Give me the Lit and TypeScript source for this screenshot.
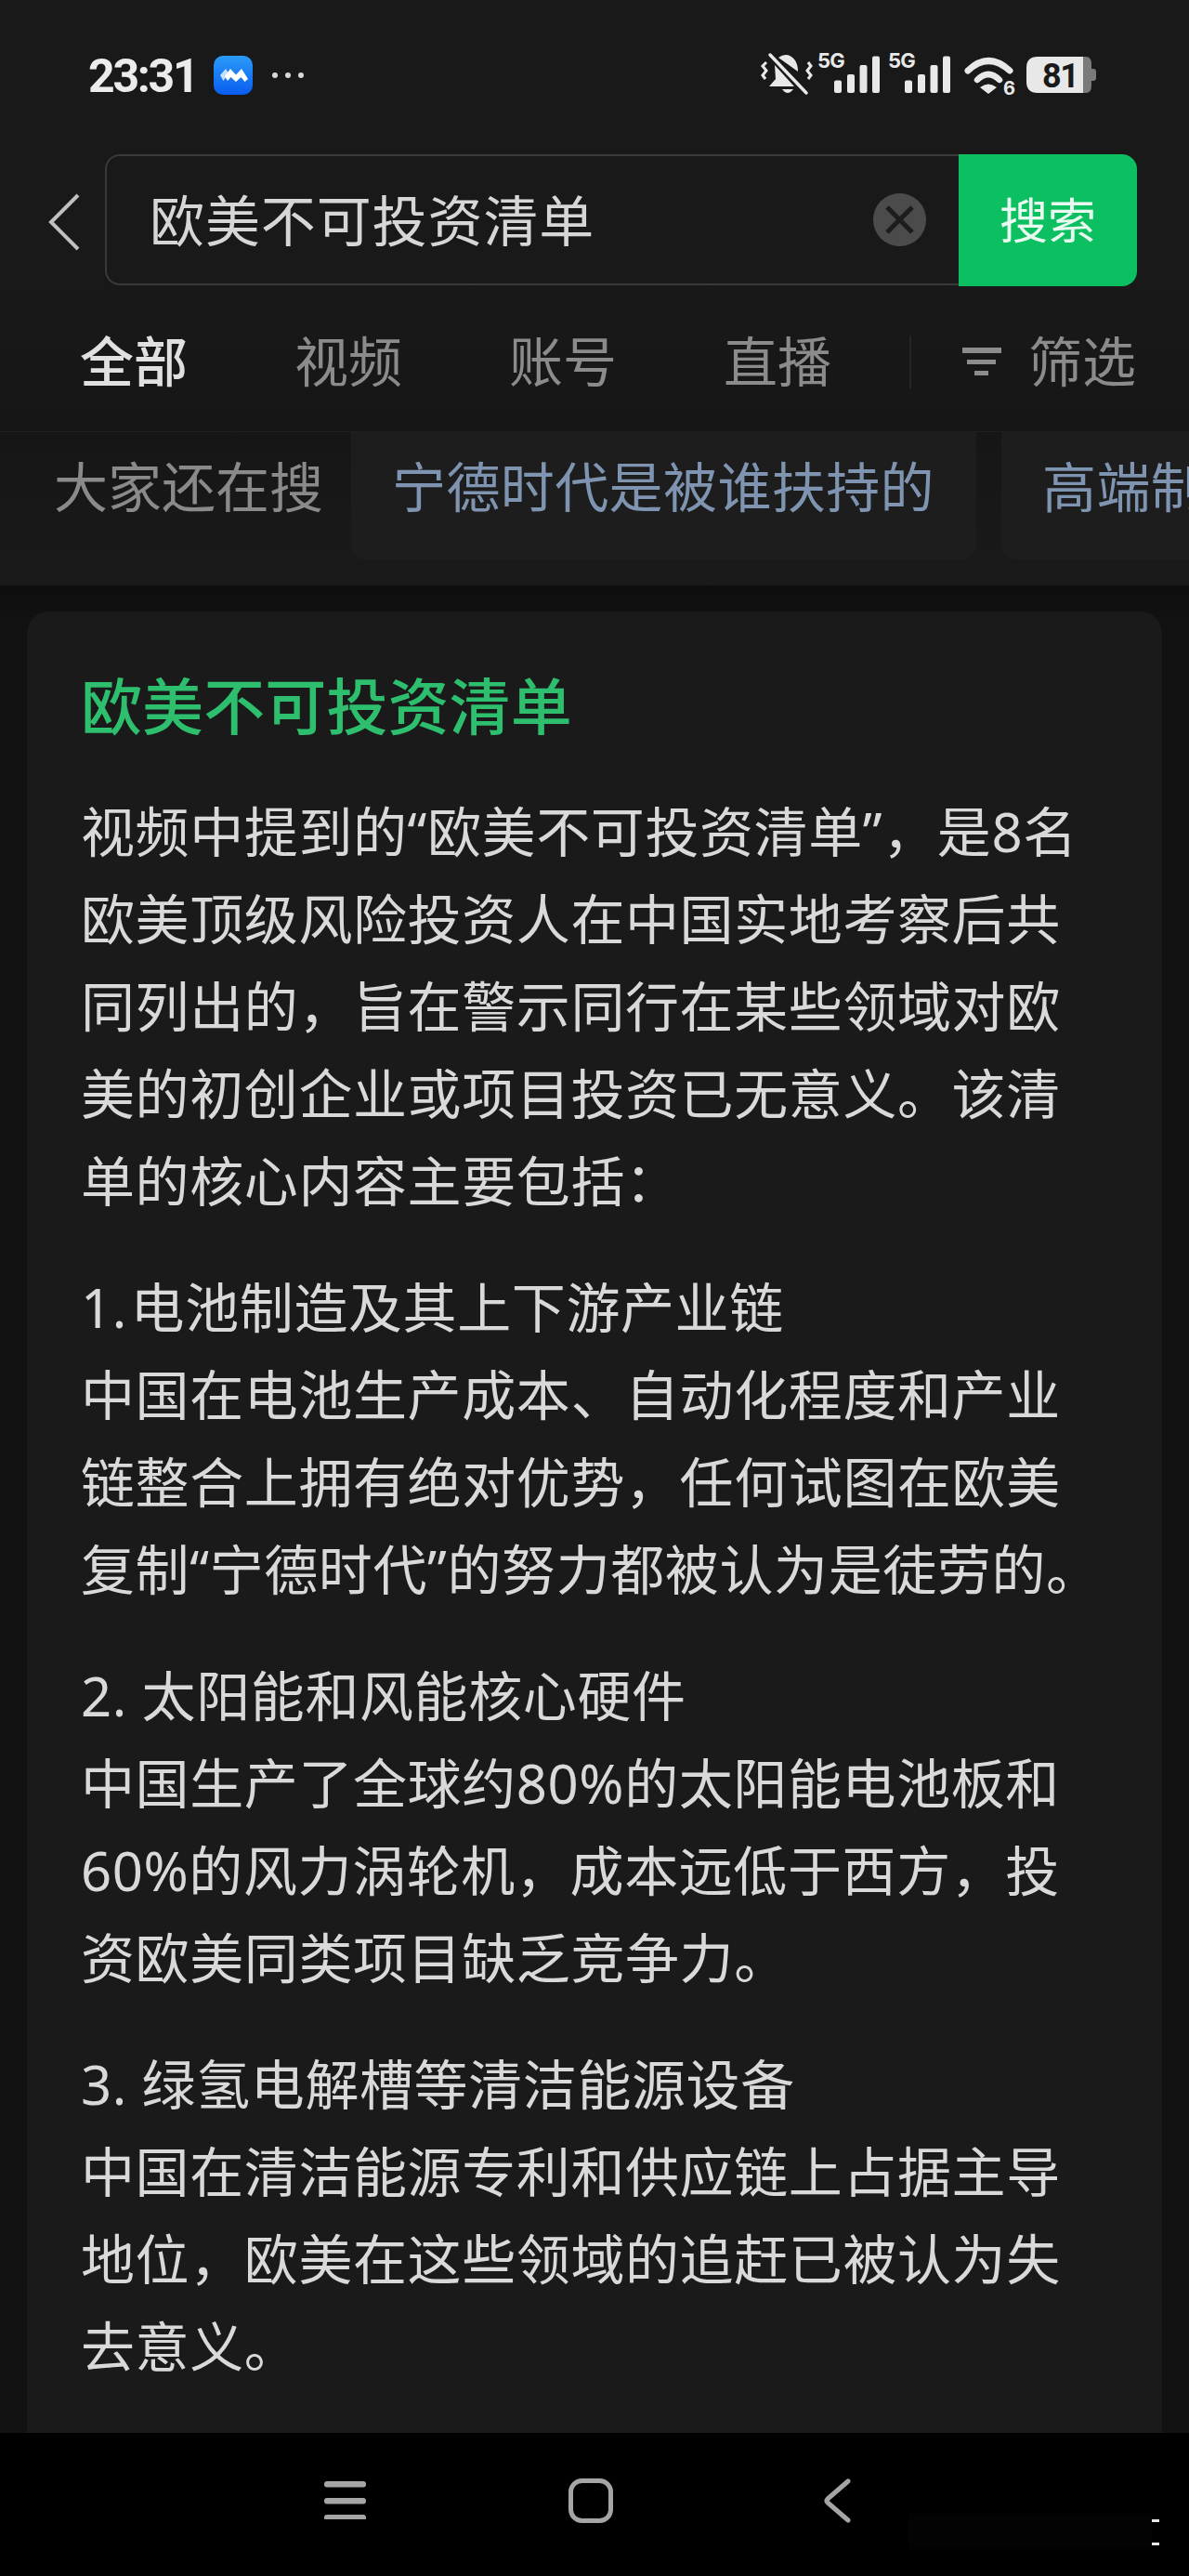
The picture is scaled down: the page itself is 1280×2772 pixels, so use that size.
import { LitElement, html, css, svg } from "lit";
import { customElement } from "lit/decorators.js";

const sections = [
  {
    head: "1. 电池制造及其上下游产业链",
    tight: true,
    lines: ["中国在电池生产成本、自动化程度和产业", "链整合上拥有绝对优势，任何试图在欧美", "复制“宁德时代”的努力都被认为是徒劳的。"],
  },
  {
    head: "2. 太阳能和风能核心硬件",
    tight: false,
    lines: ["中国生产了全球约80%的太阳能电池板和", "60%的风力涡轮机，成本远低于西方，投", "资欧美同类项目缺乏竞争力。"],
  },
  {
    head: "3. 绿氢电解槽等清洁能源设备",
    tight: false,
    lines: ["中国在清洁能源专利和供应链上占据主导", "地位，欧美在这些领域的追赶已被认为失", "去意义。"],
  },
];

const intro = ["视频中提到的“欧美不可投资清单”，是8名", "欧美顶级风险投资人在中国实地考察后共", "同列出的，旨在警示同行在某些领域对欧", "美的初创企业或项目投资已无意义。该清", "单的核心内容主要包括："];

// four bars, bottom aligned at y=44 of the status svg
const signal = svg`<rect x="0" y="30.5" width="8" height="13.5" rx="2"/><rect x="14" y="24" width="8" height="20" rx="2"/><rect x="27.5" y="14" width="8" height="30" rx="2"/><rect x="41" y="4.5" width="8" height="39.5" rx="2"/>`;

@customElement("app-root")
export class AppRoot extends LitElement {
  static styles = css`
    :host {
      display: block;
      width: 1280px;
      height: 2772px;
      background: #191919;
      font-family: "Noto Sans", "Noto Sans CJK SC", sans-serif;
      overflow: hidden;
    }
    .page { display: flex; flex-direction: column; height: 2772px; }
    .status {
      height: 166px;
      flex: none;
      display: flex;
      align-items: flex-start;
      padding: 56px 100px 0 95px;
      box-sizing: border-box;
    }
    .time {
      font-family: Roboto, sans-serif;
      font-size: 50px;
      font-weight: 700;
      line-height: 52px;
      letter-spacing: -2.3px;
      width: 135px;
      color: #ececec;
      flex: none;
    }
    .applogo { margin-top: 4px; flex: none; }
    .dots { margin: 21px 0 0 21px; flex: none; }
    .status-right { margin-left: auto; flex: none; overflow: visible; }
    .search {
      height: 142px;
      flex: none;
      display: flex;
      align-items: flex-start;
      padding-right: 56px;
    }
    .back { width: 113px; padding: 42px 0 0 51px; box-sizing: border-box; flex: none; }
    .box {
      flex: 1;
      height: 141px;
      box-sizing: border-box;
      border: 2px solid #3a3a3a;
      border-right: none;
      border-radius: 16px 0 0 16px;
      display: flex;
      align-items: center;
      padding-left: 46px;
      font-size: 59px;
      letter-spacing: 0.9px;
      color: #d6d6d6;
    }
    .query { flex: 1; padding-bottom: 5px; }
    .clear { margin-right: 35px; flex: none; }
    .go {
      width: 192px;
      height: 142px;
      box-sizing: border-box;
      padding-bottom: 5px;
      flex: none;
      background: #0cbf60;
      border-radius: 0 16px 16px 0;
      color: #e8faf0;
      font-size: 52px;
      display: flex;
      align-items: center;
      justify-content: center;
    }
    .tabs {
      height: 156px;
      flex: none;
      display: flex;
      align-items: center;
      gap: 115px;
      font-size: 58px;
      color: #8b8b8b;
      padding: 6px 0 0 86px;
      box-sizing: border-box;
      background: linear-gradient(#191919, #161616);
    }
    .tab { flex: none; line-height: 70px; }
    .tab.active { color: #e0e0e0; font-weight: 500; }
    .sep { flex: none; width: 2px; height: 57px; background: #262626; margin: 0 -60px 0 -31px; }
    .filter { flex: none; display: flex; align-items: center; gap: 29px; line-height: 70px; }
    .chips {
      height: 166px;
      flex: none;
      box-sizing: border-box;
      border-top: 1px solid #1f1f1f;
      display: flex;
      padding-left: 58px;
      overflow: hidden;
      font-size: 58px;
      background: linear-gradient(#161616, #1a1a1a);
    }
    .chips-label { width: 320px; flex: none; color: #8a8a8a; padding-top: 19px; line-height: 80px; }
    .chip {
      flex: none;
      height: 137px;
      box-sizing: border-box;
      background: #1d1d1d;
      border-radius: 0 0 14px 14px;
      color: #7e94b0;
      padding: 19px 45px 0 44px;
      line-height: 80px;
      letter-spacing: 0.4px;
      margin-right: 27px;
      white-space: nowrap;
    }
    .content {
      flex: 1;
      background: linear-gradient(#0e0e0e, #121212 40px);
      padding: 28px 29px 0;
      overflow: hidden;
      min-height: 0;
    }
    .card {
      background: #1a1a1a;
      border-radius: 24px 24px 0 0;
      height: 100%;
      padding: 56px 0 0 58px;
      box-sizing: border-box;
      font-size: 58px;
      line-height: 94px;
      color: #d9d9d9;
      letter-spacing: 0.6px;
    }
    .title { color: #2dbf6e; font-size: 66px; line-height: 90px; font-weight: 500; margin-bottom: 44px; letter-spacing: 0.1px; }
    .line { white-space: nowrap; }
    .line.tight { word-spacing: -12px; }
    .block { margin-top: 42px; }
    .nav {
      height: 154px;
      flex: none;
      background: #000;
      display: flex;
      align-items: flex-start;
      padding: 49px 0 0 349px;
      box-sizing: border-box;
      position: relative;
    }
    .nav svg { flex: none; }
    .nav .home { margin-left: 218px; }
    .nav .navback { margin-left: 226px; }
    .smudge {
      position: absolute;
      left: 977px;
      top: 87px;
      width: 263px;
      height: 38px;
      background: #030303;
    }
    .speck { position: absolute; left: 1240px; width: 8px; height: 3px; background: #e8e8e8; }
    .speck.one { top: 93px; }
    .speck.two { top: 118px; }
  `;

  render() {
    return html`
      <div class="page">
        <div class="status">
          <span class="time">23:31</span>
          <svg class="applogo" width="42" height="42" viewBox="0 0 42 42">
            <defs>
              <linearGradient id="lg" x1="0" y1="0" x2="0" y2="1">
                <stop offset="0" stop-color="#2a9bf8" />
                <stop offset="1" stop-color="#0a5cf0" />
              </linearGradient>
            </defs>
            <rect width="42" height="42" rx="10" fill="url(#lg)" />
            <path d="M7 21 L13 14 L16 19 L10.5 27 Z" fill="#c4e0ff" />
            <path d="M18 14 L24 20.5 L30 14 L37 25 L33.5 28 L29.5 23 L24 28 L18.5 23 L15 27 L12 22 Z" fill="#fff" />
          </svg>
          <svg class="dots" width="34" height="8" viewBox="0 0 34 8" fill="#d8d8d8">
            <circle cx="3" cy="4" r="3" /><circle cx="17" cy="4" r="3" /><circle cx="31" cy="4" r="3" />
          </svg>
          <svg class="status-right" width="360" height="48" viewBox="0 0 360 48" fill="#e8e8e8">
            <path d="M9 3 L48 44" stroke="#e8e8e8" stroke-width="3.5" fill="none" stroke-linecap="round" />
            <path d="M18 6 Q28 -1 36 9 Q39 14 39 21 Z M14 14 L35 37 H8 L15 29 Z M22 40 H34 Q28 48 22 40 Z" />
            <path d="M5 11 L1 15 L5 20 L1 25 L4 29 M50 11 L53 15 L49 20 L53 25 L50 29" fill="none" stroke="#e8e8e8" stroke-width="3" />
            <text x="60" y="17" font-family="Inter, sans-serif" font-weight="700" font-size="22" letter-spacing="-0.8">5G</text>
            <g transform="translate(78 0)">${signal}</g>
            <text x="136" y="17" font-family="Inter, sans-serif" font-weight="700" font-size="22" letter-spacing="-0.8">5G</text>
            <g transform="translate(154 0)">${signal}</g>
            <g transform="translate(218 6)">
              <path d="M4 14 Q26 -7 49 14" fill="none" stroke="#e8e8e8" stroke-width="7" stroke-linecap="round" />
              <path d="M14 24 Q26 12 38 24" fill="none" stroke="#e8e8e8" stroke-width="6.5" stroke-linecap="round" />
              <path d="M17 32 Q26 25 35 32 L26 39 Z" />
            </g>
            <text x="260" y="46" font-family="Inter, sans-serif" font-weight="700" font-size="20">6</text>
            <path d="M297 5 H346 V44 H297 Q285 44 285 32 V17 Q285 5 297 5 Z" fill="#e8e8e8" />
            <path d="M346 5 H349 Q355 5 355 13 V36 Q355 44 349 44 H346 Z" fill="#7a7a7a" />
            <path d="M355 18 H357 Q360 18 360 21 V28 Q360 31 357 31 H355 Z" fill="#7a7a7a" />
            <text x="302" y="38" font-family="Roboto, sans-serif" font-weight="700" font-size="36" fill="#191919" letter-spacing="-1.5">81</text>
          </svg>
        </div>

        <div class="search">
          <div class="back">
            <svg width="35" height="62" viewBox="0 0 35 62" fill="none" stroke="#c0c0c0" stroke-width="4">
              <path d="M33 2 L4 31 L33 60" />
            </svg>
          </div>
          <div class="box">
            <span class="query">欧美不可投资清单</span>
            <svg class="clear" width="57" height="57" viewBox="0 0 57 57">
              <circle cx="28.5" cy="28.5" r="28.5" fill="#4b4b4b" />
              <path d="M15 15 L42 42 M42 15 L15 42" stroke="#1d1d1d" stroke-width="5" />
            </svg>
          </div>
          <div class="go">搜索</div>
        </div>

        <div class="tabs">
          <span class="tab active">全部</span>
          <span class="tab">视频</span>
          <span class="tab">账号</span>
          <span class="tab">直播</span>
          <span class="sep"></span>
          <span class="filter">
            <svg width="42" height="30" viewBox="0 0 42 30" fill="#8c8c8c">
              <rect x="0" y="0" width="42" height="6" /><rect x="5" y="13" width="31" height="5" /><rect x="13" y="25" width="15" height="5" />
            </svg>
            筛选
          </span>
        </div>

        <div class="chips">
          <span class="chips-label">大家还在搜</span>
          <span class="chip">宁德时代是被谁扶持的</span>
          <span class="chip">高端制造</span>
        </div>

        <div class="content">
          <div class="card">
            <div class="title">欧美不可投资清单</div>
            ${intro.map((l) => html`<div class="line">${l}</div>`)}
            ${sections.map(
              (s) => html`<div class="block">
                <div class="line ${s.tight ? "tight" : ""}">${s.head}</div>
                ${s.lines.map((l) => html`<div class="line">${l}</div>`)}
              </div>`
            )}
          </div>
        </div>

        <div class="nav">
          <svg width="45" height="44" viewBox="0 0 45 44" fill="#a5a5a5">
            <rect x="0" y="3" width="45" height="6.5" rx="3" /><rect x="0" y="21" width="45" height="6.5" rx="3" /><rect x="0" y="39" width="45" height="6.5" rx="3" />
          </svg>
          <svg class="home" width="48" height="48" viewBox="0 0 48 48" fill="none" stroke="#a5a5a5" stroke-width="5">
            <rect x="2.5" y="2.5" width="43" height="43" rx="12" />
          </svg>
          <svg class="navback" width="30" height="48" viewBox="0 0 30 48" fill="none" stroke="#a5a5a5" stroke-width="5" stroke-linecap="round" stroke-linejoin="round">
            <path d="M27 3 L5 22 Q3 24 5 26 L27 45" />
          </svg>
          <div class="smudge"></div>
          <div class="speck one"></div>
          <div class="speck two"></div>
        </div>
      </div>
    `;
  }
}
